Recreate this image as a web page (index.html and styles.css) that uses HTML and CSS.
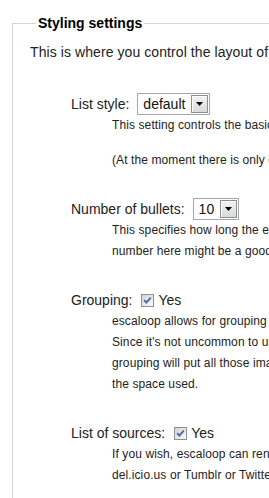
FILE: index.html
```html
<!DOCTYPE html>
<html lang="en">
<head>
    <meta charset="UTF-8">
    <meta name="viewport" content="width=device-width, initial-scale=1.0">
    <title>escaloop - Styling settings</title>
    <link rel="stylesheet" href="styles.css">
</head>
<body>
<div class="page">
    <fieldset class="settings">
        <legend>Styling settings</legend>
        <p class="intro">This is where you control the layout of the escaloop list on your page.</p>

        <!-- List style -->
        <div class="option">
            <div class="option-row">
                <label>List style:</label>
                <span class="select">
                    <span class="select-value">default</span>
                    <span class="select-button"><svg width="7" height="4" viewBox="0 0 7 4"><polygon points="0,0 7,0 3.5,4" fill="#000"/></svg></span>
                </span>
            </div>
            <div class="description">
                <p>This setting controls the basic look of the list that escaloop renders.</p>
                <p>(At the moment there is only one style available, more will follow.)</p>
            </div>
        </div>

        <!-- Number of bullets -->
        <div class="option">
            <div class="option-row">
                <label>Number of bullets:</label>
                <span class="select">
                    <span class="select-value">10</span>
                    <span class="select-button"><svg width="7" height="4" viewBox="0 0 7 4"><polygon points="0,0 7,0 3.5,4" fill="#000"/></svg></span>
                </span>
            </div>
            <div class="description">
                <p>This specifies how long the escaloop list will be. If you have a narrow sidebar, a lower<br>
                number here might be a good idea.</p>
            </div>
        </div>

        <!-- Grouping -->
        <div class="option">
            <div class="option-row">
                <label>Grouping:</label>
                <span class="checkbox"><svg width="11" height="11" viewBox="0 0 11 11"><path d="M2.2 5.2 L4.3 7.6 L8.8 2.6" fill="none" stroke="#4a64aa" stroke-width="1.8"/></svg></span>
                <span class="check-text">Yes</span>
            </div>
            <div class="description">
                <p>escaloop allows for grouping of consecutive items coming from the same source.<br>
                Since it's not uncommon to upload a bunch of images to Flickr in one go, turning on<br>
                grouping will put all those images into one single entry, which greatly reduces<br>
                the space used.</p>
            </div>
        </div>

        <!-- List of sources -->
        <div class="option">
            <div class="option-row">
                <label>List of sources:</label>
                <span class="checkbox"><svg width="11" height="11" viewBox="0 0 11 11"><path d="M2.2 5.2 L4.3 7.6 L8.8 2.6" fill="none" stroke="#4a64aa" stroke-width="1.8"/></svg></span>
                <span class="check-text">Yes</span>
            </div>
            <div class="description">
                <p>If you wish, escaloop can render a list of all your sources, such as Flickr or<br>
                del.icio.us or Tumblr or Twitter, below the list of items.</p>
            </div>
        </div>
    </fieldset>
</div>
</body>
</html>
```

FILE: styles.css
```css
/* General */
html, body {
    overflow: hidden;
}

body {
    margin: 0;
    font-family: "Liberation Sans", Arial, sans-serif;
    color: #222;
    background-color: #fff;
}

.page {
    width: 760px;
}

/* Fieldset box */
.settings {
    margin: 15px 0 0 12px;
    padding: 0 0 30px 17px;
    border: 1px solid #d4d4d4;
    min-width: 0;
}

.settings legend {
    margin-left: 6px;
    padding: 0 2px;
    font-size: 14px;
    font-weight: bold;
    color: #000;
}

.intro {
    margin: 13px 0 33px;
    font-size: 14px;
    line-height: 16px;
    letter-spacing: 0.08px;
}

/* One setting */
.option {
    margin-top: 27px;
    margin-left: 41px;
}

.option-row {
    display: flex;
    align-items: center;
    height: 22px;
    font-size: 14px;
}

.option-row label {
    margin-right: 8px;
}

.description {
    margin-left: 41px;
    font-size: 12px;
    line-height: 21px;
    letter-spacing: 0.1px;
}

.description p {
    margin: 0;
}

.description p + p {
    margin-top: 14px;
}

/* Fake select box */
.select {
    display: inline-flex;
    align-items: stretch;
    height: 22px;
    box-sizing: border-box;
    border: 1px solid #a5a9ad;
    padding: 1px;
    background-color: #fff;
}

.select-value {
    padding: 0 6px 0 4px;
    line-height: 18px;
    color: #111;
}

.select-button {
    display: flex;
    align-items: center;
    justify-content: center;
    width: 17px;
    box-sizing: border-box;
    border: 1px solid #8d8f90;
    background: linear-gradient(#f3f3f3, #d9d9d9);
    box-shadow: inset 1px 1px 0 #fff;
}

/* Fake checkbox */
.checkbox {
    display: inline-flex;
    align-items: center;
    justify-content: center;
    width: 13px;
    height: 13px;
    box-sizing: border-box;
    margin-left: 1px;
    border: 1px solid #8e9092;
    background: linear-gradient(135deg, #d3d3ce, #fbfbfb);
}

.check-text {
    margin-left: 4px;
}
```
